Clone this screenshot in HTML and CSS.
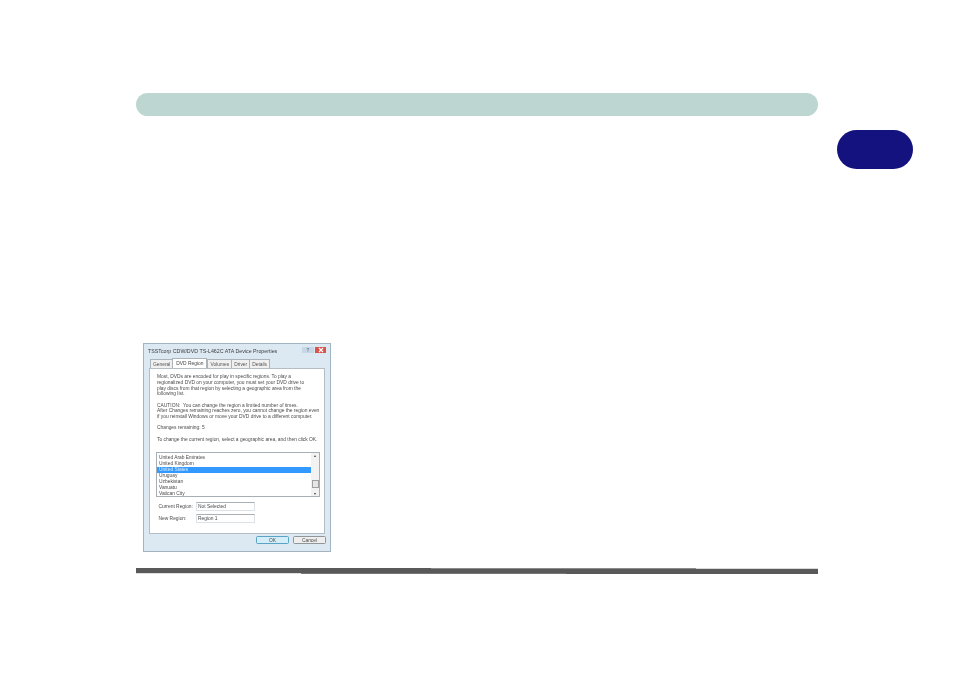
FILE: index.html
```html
<!DOCTYPE html>
<html lang="en">
<head>
<meta charset="utf-8">
<title>DVD Region</title>
<link rel="stylesheet" href="styles.css">
</head>
<body>
<div class="page">
  <header class="top-bar"></header>
  <div class="chapter-tab"></div>
  <section class="dialog">
    <div class="title-row">
      <span class="title">TSSTcorp CDW/DVD TS-L462C ATA Device Properties</span>
      <span class="win-buttons">
        <span class="win-help">?</span>
        <span class="win-close"><svg viewBox="0 0 8 6" width="8" height="6"><path d="M2 1 6 5M6 1 2 5" stroke="#fff" stroke-width="1.2"/></svg></span>
      </span>
    </div>
    <div class="tabs">
      <span class="tab">General</span>
      <span class="tab active">DVD Region</span>
      <span class="tab">Volumes</span>
      <span class="tab">Driver</span>
      <span class="tab">Details</span>
    </div>
    <div class="panel">
      <p class="para">Most, DVDs are encoded for play in specific regions. To play a<br>regionalized DVD on your computer, you must set your DVD drive to<br>play discs from that region by selecting a geographic area from the<br>following list.</p>
      <p class="para">CAUTION:&nbsp; You can change the region a limited number of times.<br>After Changes remaining reaches zero, you cannot change the region even<br>if you reinstall Windows or move your DVD drive to a different computer.</p>
      <p class="para">Changes remaining: 5</p>
      <p class="para">To change the current region, select a geographic area, and then click OK.</p>
      <div class="listbox">
        <ul class="items">
          <li>United Arab Emirates</li>
          <li>United Kingdom</li>
          <li class="selected">United States</li>
          <li>Uruguay</li>
          <li>Uzbekistan</li>
          <li>Vanuatu</li>
          <li>Vatican City</li>
        </ul>
        <div class="scrollbar">
          <span class="arrow">▴</span>
          <span class="thumb"></span>
          <span class="arrow">▾</span>
        </div>
      </div>
      <div class="field-row"><span class="label">Current Region:</span><span class="field">Not Selected</span></div>
      <div class="field-row"><span class="label">New Region:</span><span class="field">Region 1</span></div>
    </div>
    <div class="buttons">
      <span class="btn ok">OK</span>
      <span class="btn">Cancel</span>
    </div>
  </section>
  <footer class="bottom-rule">
    <span class="seg seg-a"></span>
    <span class="seg seg-b"></span>
    <span class="seg seg-c"></span>
    <span class="seg seg-d"></span>
    <span class="seg seg-e"></span>
  </footer>
</div>
</body>
</html>
```
FILE: styles.css
```css
html, body { margin: 0; padding: 0; background: #fff; }
body { width: 954px; height: 673px; overflow: hidden; }
.page { position: relative; height: 673px; padding: 93px 0 0 136px; display: flex; flex-direction: column; box-sizing: border-box; width: 818px; }
.top-bar { height: 23px; background: #bdd6d2; border-radius: 11.5px; flex: none; }
.chapter-tab { position: absolute; left: 837px; top: 130px; width: 76px; height: 39px; background: #14127f; border-radius: 19.5px; }
.dialog { flex: none; width: 188px; height: 209px; margin: 227px 0 0 7px; box-sizing: border-box; padding: 0 5px 0 5px; background: #dce9f3; border: 1px solid #a3b3bf; font-family: "Liberation Sans", Arial, sans-serif; font-size: 4.88px; color: #4a4a4a; display: flex; flex-direction: column; }
.dialog > * { filter: blur(0.45px); }
.title-row { height: 14px; display: flex; align-items: center; justify-content: space-between; flex: none; }
.title { font-size: 5.3px; color: #3c3c3c; margin-left: -1px; }
.win-buttons { display: flex; margin-top: -3px; margin-right: -1px; gap: 1px; }
.win-help { width: 12px; height: 6px; background: #c6d8e6; color: #667; font-size: 5px; line-height: 6px; text-align: center; }
.win-close { width: 11px; height: 6px; background: #d9534a; display: flex; align-items: center; justify-content: center; }
.tabs { display: flex; height: 11px; align-items: flex-end; padding-left: 1px; flex: none; }
.tab { height: 9px; line-height: 9px; padding: 0 2px; background: #f0f0f0; border: 1px solid #aab3ba; border-bottom: 0; margin-right: -1px; color: #555; box-sizing: content-box; }
.tab.active { height: 10px; line-height: 10px; background: #fff; position: relative; z-index: 1; padding: 0 3px; margin-right: 0; color: #444; }
.panel { background: #fff; border: 1px solid #b4bdc4; height: 166px; box-sizing: border-box; padding: 5px 4px 0 7px; flex: none; margin-top: -1px; }
.para { margin: 0 0 5.4px; line-height: 5.8px; white-space: nowrap; }
.listbox { display: flex; height: 45px; margin: 10px 0 0 -1px; border: 1px solid #a7afb6; box-sizing: border-box; }
.items { list-style: none; margin: 0; padding: 1.5px 0 0 0; flex: 1; overflow: hidden; }
.items li { height: 6px; line-height: 6px; padding-left: 2px; }
.items .selected { background: #3399ff; color: #d8ecff; }
.scrollbar { width: 8px; background: #f2f2f2; display: flex; flex-direction: column; align-items: center; justify-content: space-between; font-size: 4px; line-height: 5px; }
.arrow { color: #444; }
.thumb { width: 7px; height: 8px; margin-top: 18px; background: #e6e6e6; border: 1px solid #a0a0a0; box-sizing: border-box; }
.field-row { display: flex; align-items: center; height: 9px; margin-top: 5px; }
.field-row + .field-row { margin-top: 3px; }
.field-row .label { width: 39px; padding-left: 1.5px; box-sizing: border-box; }
.field { width: 59px; height: 9px; line-height: 8px; padding-left: 1px; box-sizing: border-box; border: 1px solid #dde2e6; border-top-color: #a9b1b7; }
.buttons { display: flex; justify-content: flex-end; gap: 4px; padding: 2px 0 0 0; margin-right: -1px; }
.btn { width: 33px; height: 8px; line-height: 7px; text-align: center; background: #eeeeee; border: 1px solid #8f9599; border-radius: 1.5px; box-sizing: border-box; }
.btn.ok { background: #d3eef8; border-color: #5aa3c4; }
.bottom-rule { flex: none; height: 7px; margin-top: 16px; display: flex; align-items: flex-start; }
.seg { display: block; background: #595959; }
.seg-a { width: 165px; height: 5px; box-shadow: 0 1px 0 #dedede; }
.seg-b { width: 130px; height: 5px; border-bottom: 1px solid #777; }
.seg-c { width: 135px; height: 4px; border-top: 1px solid #8a8a8a; border-bottom: 1px solid #777; }
.seg-d { width: 130px; height: 5px; border-top: 1px solid #8a8a8a; }
.seg-e { width: 122px; height: 5px; margin-top: 1px; box-shadow: 0 -1px 0 #d8d8d8; }
```
